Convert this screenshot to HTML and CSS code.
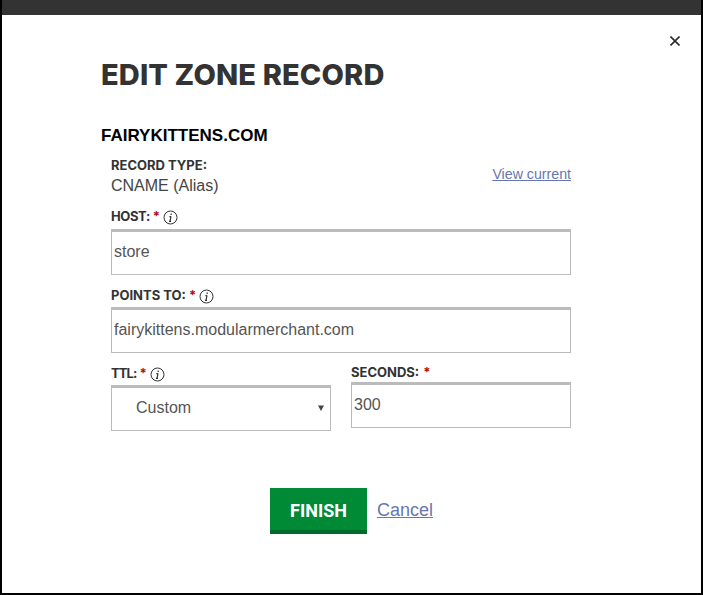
FILE: index.html
```html
<!DOCTYPE html>
<html lang="en">
<head>
<meta charset="utf-8">
<title>Edit Zone Record</title>
<link rel="stylesheet" href="styles.css">
</head>
<body>
<div class="page">
<div class="topbar"></div>
<main class="modal">
  <button class="close" aria-label="Close">
    <svg width="10" height="10" viewBox="0 0 10 10"><path d="M0.5 0.5L9.5 9.5M9.5 0.5L0.5 9.5" stroke="#2b2b2b" stroke-width="1.6" fill="none"/></svg>
  </button>
  <h1 class="title">EDIT ZONE RECORD</h1>
  <h2 class="domain">FAIRYKITTENS.COM</h2>
  <form class="form">
    <div class="type-row">
      <div>
        <div class="label">RECORD TYPE:</div>
        <div class="type-value">CNAME (Alias)</div>
      </div>
      <a class="view-link" href="#">View current</a>
    </div>
    <div class="field host">
      <div class="label label-icon"><span class="tight">HOST:</span><span class="req">*</span><svg class="info" width="15" height="15" viewBox="0 0 15 15"><circle cx="7.5" cy="7.5" r="6.5" fill="none" stroke="#333" stroke-width="1"/><path d="M8.2 3.4v1.6M8 6.4L7 11.4M6.4 6.6H8M6 11.3H8" stroke="#333" stroke-width="1.2" fill="none"/></svg></div>
      <input class="input" value="store">
    </div>
    <div class="field points">
      <div class="label label-icon"><span>POINTS TO:</span><span class="req">*</span><svg class="info" width="15" height="15" viewBox="0 0 15 15"><circle cx="7.5" cy="7.5" r="6.5" fill="none" stroke="#333" stroke-width="1"/><path d="M8.2 3.4v1.6M8 6.4L7 11.4M6.4 6.6H8M6 11.3H8" stroke="#333" stroke-width="1.2" fill="none"/></svg></div>
      <input class="input input-tight" value="fairykittens.modularmerchant.com">
    </div>
    <div class="split">
      <div class="ttl">
        <div class="label label-icon"><span class="tighter">TTL:</span><span class="req">*</span><svg class="info" width="15" height="15" viewBox="0 0 15 15"><circle cx="7.5" cy="7.5" r="6.5" fill="none" stroke="#333" stroke-width="1"/><path d="M8.2 3.4v1.6M8 6.4L7 11.4M6.4 6.6H8M6 11.3H8" stroke="#333" stroke-width="1.2" fill="none"/></svg></div>
        <div class="select">
          <span>Custom</span>
          <svg width="6" height="6" viewBox="0 0 6 6"><path d="M0 0.5H6L3 6Z" fill="#444"/></svg>
        </div>
      </div>
      <div class="seconds">
        <div class="label"><span>SECONDS:</span><span class="req">*</span></div>
        <input class="input input-seconds" value="300">
      </div>
    </div>
  </form>
  <div class="actions">
    <button class="finish" type="button">FINISH</button>
    <a class="cancel" href="#">Cancel</a>
  </div>
</main>
</div>
</body>
</html>
```
FILE: styles.css
```css
* { box-sizing: border-box; }
html, body { margin: 0; padding: 0; }
body {
  width: 703px;
  height: 595px;
  overflow: hidden;
  background: #fff;
  font-family: "Liberation Sans", Arial, sans-serif;
  color: #444;
}
.page {
  height: 595px;
  border: solid #000;
  border-width: 0 2px 2px 2px;
}
.topbar { height: 15px; background: #333; }
.modal {
  position: relative;
  height: 578px;
  background: #fff;
  padding: 41px 0 0 99px;
}
.close {
  position: absolute;
  top: 21px;
  right: 21px;
  width: 10px;
  height: 10px;
  padding: 0;
  border: 0;
  background: none;
  display: flex;
}
.title {
  margin: 0;
  font: 800 29px/38px Inter, sans-serif;
  color: #333;
  letter-spacing: 0.14px;
}
.domain {
  margin: 32px 0 0;
  font: 700 17px/20px "Liberation Sans", sans-serif;
  color: #000;
}
.form { width: 460px; margin: 12px 0 0 10px; }
.label {
  font: 700 13px/15px Inter, sans-serif;
  color: #333;
  display: flex;
  align-items: center;
  gap: 4px;
}
.label-icon { gap: 3px; }
.tight { letter-spacing: -0.4px; }
.tighter { letter-spacing: -0.9px; }
.req { color: #b01010; }
.info { margin: 2px 0 0 0; }
.type-row { display: flex; justify-content: space-between; align-items: center; }
.type-value { font-size: 16px; line-height: 19px; margin-top: 3px; color: #444; }
.view-link { font-size: 14.2px; color: #6677b0; margin-bottom: 5px; }
.field { margin-top: 13px; }
.points { margin-top: 12px; }
.input {
  display: block;
  width: 100%;
  height: 46px;
  margin-top: 4px;
  padding: 0 2px 2px;
  border: 1px solid #bbb;
  border-top: 3px solid #bbb;
  border-radius: 0;
  outline: 0;
  background: #fff;
  font: 16px "Liberation Sans", sans-serif;
  color: #555;
}
.input-tight { margin-top: 3px; }
.input-seconds { margin-top: 2px; }
.split { display: grid; grid-template-columns: 220px 220px; gap: 20px; margin-top: 12px; }
.select {
  height: 46px;
  margin-top: 3px;
  padding: 0 6px 2px 24px;
  border: 1px solid #bbb;
  border-top: 3px solid #bbb;
  display: flex;
  align-items: center;
  justify-content: space-between;
  font-size: 16px;
  color: #555;
}
.actions { display: flex; align-items: center; gap: 10px; margin: 57px 0 0 169px; }
.finish {
  width: 97px;
  height: 46px;
  padding: 3px 0 0;
  border: 0;
  border-bottom: 4px solid #006b2a;
  border-radius: 0;
  background: #008a36;
  color: #fff;
  font: 700 18px Roboto, sans-serif;
}
.cancel { font-size: 18px; color: #6677b0; margin-bottom: 2px; }
```
